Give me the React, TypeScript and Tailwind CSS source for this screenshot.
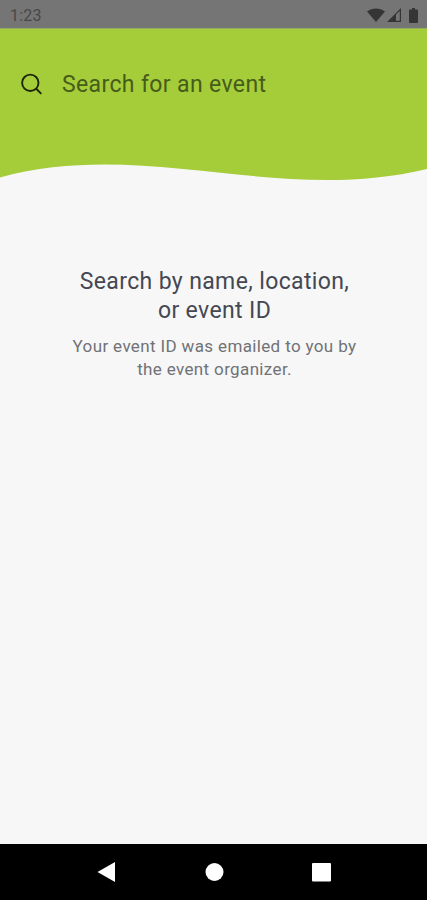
const waveFill = "#f7f7f7";

function StatusBar() {
  return (
    <div className="flex h-7 items-center justify-between bg-[#757575] pl-[10px] pr-[9px] text-[#484848]">
      <span className="pt-[3px] text-[16px] leading-none tracking-[0.2px]">1:23</span>
      <div className="flex items-center pt-0.5 text-[#353535]">
        <svg className="h-[14px] w-[18px]" viewBox="0 0 18 14" fill="currentColor">
          <path d="M0 3.500C5-.6 13-.6 18 3.500L9 14z" />
        </svg>
        <svg className="ml-0.5 h-[14px] w-[14px]" viewBox="0 0 14 14" fill="currentColor">
          <path d="M14 0v14H0zM12.800 3L9 6.500v6.300h3.800z" fillRule="evenodd" />
        </svg>
        <svg className="ml-2 h-[15px] w-[9px]" viewBox="0 0 9 15" fill="currentColor">
          <path d="M3 0h3v1.500h2q1 0 1 1V14q0 1-1 1H1q-1 0-1-1V2.500q0-1 1-1h2z" />
        </svg>
      </div>
    </div>
  );
}

function SearchHeader() {
  return (
    <header className="border-t border-[#94aa5c] bg-[#a5cd39]">
      <div className="flex h-28 items-center pl-5">
        <svg className="h-6 w-6 text-[#1c2607]" viewBox="0 0 24 24" fill="none" stroke="currentColor" strokeWidth={1.9}>
          <circle cx="10.300" cy="9.800" r="8.200" />
          <path d="M16 15.500L21.300 20.800" />
        </svg>
        <span className="ml-[18px] text-[23px] leading-7 tracking-[0.37px] text-[#465c1b]">
          Search for an event
        </span>
      </div>
      <svg className="block h-[59px] w-full" viewBox="0 0 427 59" preserveAspectRatio="none">
        <path d="M0 36.500C145-3 278 64 427 28V59H0z" fill={waveFill} />
      </svg>
    </header>
  );
}

function NavBar() {
  return (
    <nav className="flex h-14 items-center justify-center bg-black text-white">
      <svg className="h-7 w-[250px]" viewBox="0 0 250 28" fill="currentColor">
        <path d="M8.500 14L26 4v20z" />
        <circle cx="125.500" cy="14" r="9" />
        <rect x="223" y="5" width="19" height="18.500" rx="1" />
      </svg>
    </nav>
  );
}

export default function App() {
  return (
    <div className="flex h-screen flex-col bg-[#f7f7f7] font-['Roboto',sans-serif]">
      <StatusBar />
      <SearchHeader />
      <main className="flex-1 pl-[2px] pt-[67px] text-center">
        <h1 className="text-[23px] leading-[29px] tracking-[0.37px] text-[#444852]">
          Search by name, location,
          <br />
          or event ID
        </h1>
        <p className="mt-[10px] text-[17px] leading-[23px] tracking-[0.36px] text-[#707276]">
          Your event ID was emailed to you by
          <br />
          the event organizer.
        </p>
      </main>
      <NavBar />
    </div>
  );
}
